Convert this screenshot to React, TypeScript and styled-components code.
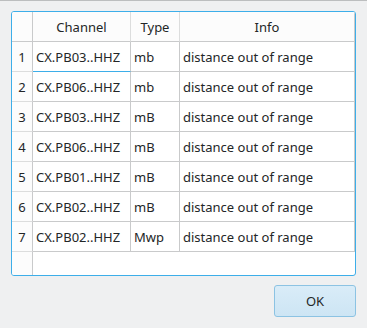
import { Fragment } from "react";
import styled, { createGlobalStyle } from "styled-components";

const GlobalStyle = createGlobalStyle`
    html, body {
        margin: 0;
        padding: 0;
        background: #eff0f1;
    }
    body {
        font-family: "Noto Sans", "DejaVu Sans", sans-serif;
        font-size: 13px;
        color: #232627;
    }
`;

const Dialog = styled.div`
    width: 367px;
    height: 328px;
    box-sizing: border-box;
    border-top: 1px solid #bcbebf;
    padding: 10px 11px 11px;
    display: flex;
    flex-direction: column;
    gap: 9px;
`;

const TableFrame = styled.div`
    height: 265px;
    box-sizing: border-box;
    border: 1px solid #3daee9;
    border-radius: 3px;
    background: #ffffff;
    overflow: hidden;
    display: flex;
    flex-direction: column;
`;

const Grid = styled.div`
    display: grid;
    grid-template-columns: 21px 98px 49px 175px;
    grid-auto-rows: 30px;
`;

const HeaderCell = styled.div<{ $corner?: boolean }>`
    background: #fcfcfc;
    border-right: 1px solid ${({ $corner }) => ($corner ? "#c9cacb" : "#dcdddd")};
    border-bottom: 1px solid #c9cacb;
    display: flex;
    align-items: center;
    justify-content: center;
    &:nth-child(4) {
        border-right: 1px solid #c9cacb;
    }
`;

const RowNumber = styled.div`
    background: #fcfcfc;
    border-right: 1px solid #c9cacb;
    border-bottom: 1px solid #dcdddd;
    display: flex;
    align-items: center;
    justify-content: center;
`;

const Cell = styled.div<{ $current?: boolean }>`
    background: #ffffff;
    border-right: 1px solid #c9cacb;
    border-bottom: 1px solid ${({ $current }) => ($current ? "#3daee9" : "#c9cacb")};
    display: flex;
    align-items: center;
    padding-left: 3px;
    white-space: nowrap;
    overflow: hidden;
`;

const Filler = styled.div`
    flex: 1;
    display: flex;
`;

const FillerHeader = styled.div`
    width: 20px;
    background: #fcfcfc;
    border-right: 1px solid #c9cacb;
`;

const ButtonRow = styled.div`
    display: flex;
    justify-content: flex-end;
`;

const OkButton = styled.button`
    width: 82px;
    height: 32px;
    border: 1px solid #8cc3e3;
    border-radius: 3px;
    background: linear-gradient(#d9ecf8, #cde5f4);
    font-family: "Noto Sans", "DejaVu Sans", sans-serif;
    font-size: 13px;
    color: #232627;
    padding: 0;
`;

const rows = [
    { channel: "CX.PB03..HHZ", type: "mb", info: "distance out of range" },
    { channel: "CX.PB06..HHZ", type: "mb", info: "distance out of range" },
    { channel: "CX.PB03..HHZ", type: "mB", info: "distance out of range" },
    { channel: "CX.PB06..HHZ", type: "mB", info: "distance out of range" },
    { channel: "CX.PB01..HHZ", type: "mB", info: "distance out of range" },
    { channel: "CX.PB02..HHZ", type: "mB", info: "distance out of range" },
    { channel: "CX.PB02..HHZ", type: "Mwp", info: "distance out of range" },
];

export default function App() {
    return (
        <>
            <GlobalStyle />
            <Dialog>
                <TableFrame>
                    <Grid>
                        <HeaderCell $corner />
                        <HeaderCell>Channel</HeaderCell>
                        <HeaderCell>Type</HeaderCell>
                        <HeaderCell>Info</HeaderCell>
                        {rows.map((r, i) => (
                            <Fragment key={i}>
                                <RowNumber>{i + 1}</RowNumber>
                                <Cell $current={i === 0}>{r.channel}</Cell>
                                <Cell>{r.type}</Cell>
                                <Cell>{r.info}</Cell>
                            </Fragment>
                        ))}
                    </Grid>
                    <Filler>
                        <FillerHeader />
                    </Filler>
                </TableFrame>
                <ButtonRow>
                    <OkButton>OK</OkButton>
                </ButtonRow>
            </Dialog>
        </>
    );
}
